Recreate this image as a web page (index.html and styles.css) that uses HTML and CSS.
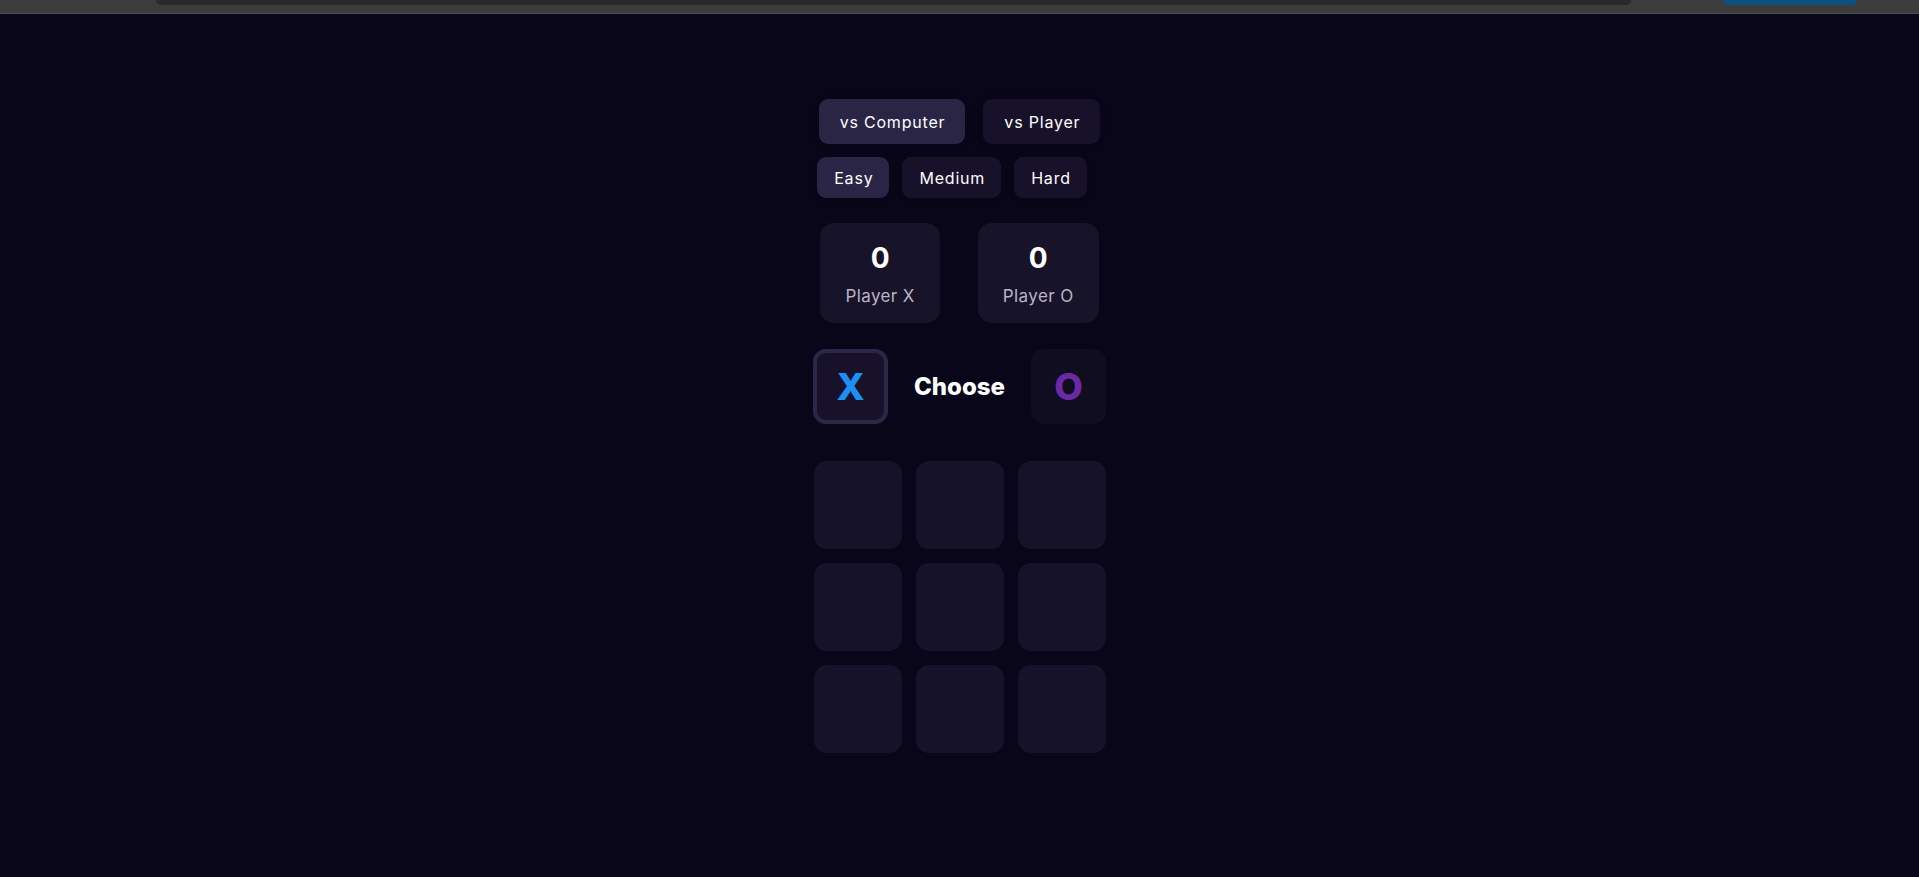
FILE: index.html
```html
<!DOCTYPE html>
<html lang="en">
<head>
<meta charset="utf-8">
<title>Tic Tac Toe</title>
<link rel="stylesheet" href="styles.css">
</head>
<body>
<div class="topbar">
  <div class="topbar-field"></div>
  <div class="topbar-btn"></div>
</div>
<main class="game">
  <div class="modes">
    <button class="pill pill-mode active">vs Computer</button>
    <button class="pill pill-mode">vs Player</button>
  </div>
  <div class="levels">
    <button class="pill pill-level active">Easy</button>
    <button class="pill pill-level">Medium</button>
    <button class="pill pill-level">Hard</button>
  </div>
  <div class="scores">
    <div class="score"><div class="score-num">0</div><div class="score-label">Player X</div></div>
    <div class="score"><div class="score-num">0</div><div class="score-label">Player O</div></div>
  </div>
  <div class="choose">
    <div class="pick pick-x selected">X</div>
    <div class="choose-text">Choose</div>
    <div class="pick pick-o">O</div>
  </div>
  <div class="board">
    <div class="cell"></div><div class="cell"></div><div class="cell"></div>
    <div class="cell"></div><div class="cell"></div><div class="cell"></div>
    <div class="cell"></div><div class="cell"></div><div class="cell"></div>
  </div>
</main>
</body>
</html>
```
FILE: styles.css
```css
* { box-sizing: border-box; }
html, body { margin: 0; padding: 0; }
body {
  background: #09061a;
  font-family: Inter, "Noto Sans", sans-serif;
  color: #ffffff;
  height: 877px;
  overflow: hidden;
}
.topbar {
  height: 14px;
  background: #3c3c3c;
  border-bottom: 1px solid #4e4e4e;
  display: flex;
  align-items: flex-start;
}
.topbar-field {
  margin-left: 156px;
  width: 1475px;
  height: 5px;
  background: #2a2a2a;
  border-radius: 0 0 8px 8px;
}
.topbar-btn {
  margin-left: 92px;
  width: 134px;
  height: 5px;
  background: #0b4f83;
  border-radius: 0 0 8px 8px;
}
.game {
  display: flex;
  flex-direction: column;
  align-items: center;
  padding-top: 85px;
}
.pill {
  font-family: inherit;
  color: #ffffff;
  border: none;
  background: #17122a;
  border-radius: 9px;
  box-shadow: 0 0 6px rgba(0,0,0,0.35);
  cursor: pointer;
  letter-spacing: 0.8px;
}
.pill.active { background: #2b2545; }
.modes { display: flex; gap: 18px; }
.pill-mode { height: 45px; padding: 0 20px 0 21px; font-size: 16px; }
.levels { display: flex; gap: 13px; margin-top: 13px; margin-right: 15px; }
.pill-level { height: 41px; padding: 0 16px 0 17px; font-size: 16px; }
.scores { display: flex; gap: 38px; margin-top: 25px; }
.score {
  background: #171328;
  border-radius: 14px;
  height: 100px;
  padding: 0 25px;
  display: flex;
  flex-direction: column;
  align-items: center;
}
.score-num { font-size: 28px; font-weight: 700; margin-top: 18px; line-height: 34px; }
.score-label { font-size: 17px; color: #b9b5c7; margin-top: 11px; letter-spacing: 0.4px; }
.choose { display: flex; align-items: center; gap: 26px; margin-top: 26px; }
.pick {
  width: 75px; height: 75px;
  border-radius: 13px;
  display: flex; align-items: center; justify-content: center;
  font-size: 37px; font-weight: 800;
}
.pick-x { background: #17122a; border: 4px solid #2d2747; color: #1e90f5; }
.pick-o { background: #110d21; color: #6a2aa6; }
.choose-text { font-size: 24px; font-weight: 800; }
.board {
  margin-top: 37px;
  display: grid;
  grid-template-columns: repeat(3, 88px);
  grid-auto-rows: 88px;
  gap: 14px;
}
.cell { background: #161229; border-radius: 13px; }
```
